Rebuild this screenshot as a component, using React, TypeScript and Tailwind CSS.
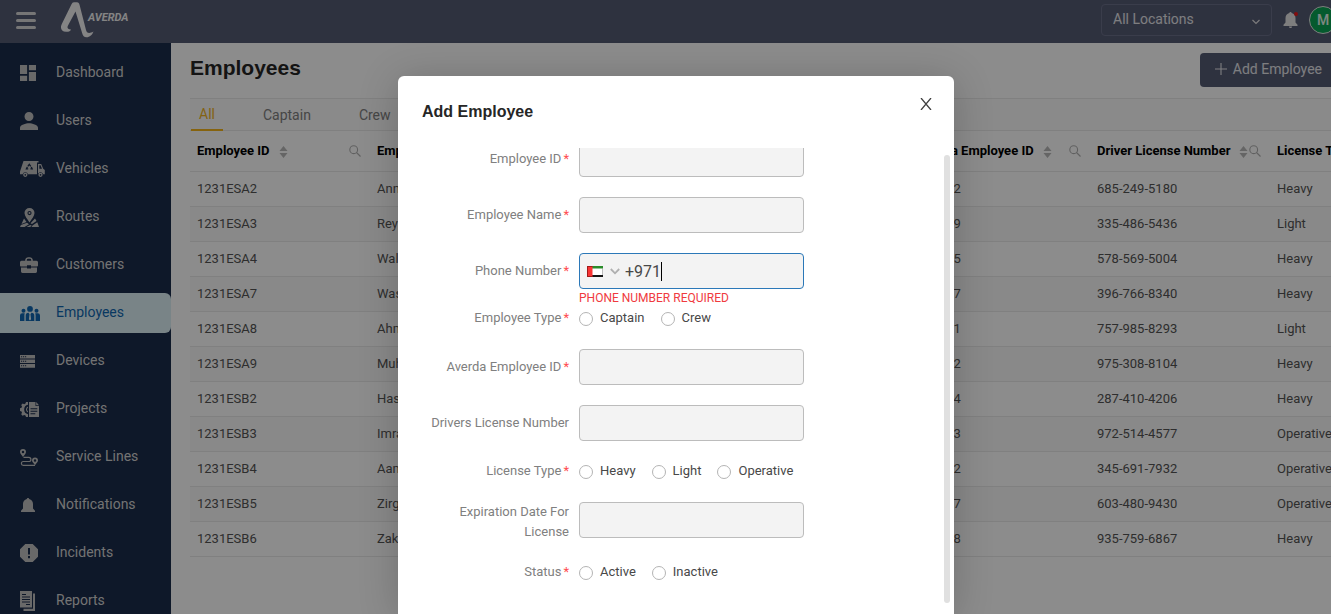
import React from 'react';

const iconDashboard = (
  <svg className="h-4 w-4" viewBox="3 3 18 18" fill="currentColor"><path d="M3 13h8V3H3v10zm0 8h8v-6H3v6zm10 0h8V11h-8v10zm0-18v6h8V3h-8z" /></svg>
);
const iconUsers = (
  <svg className="h-[18px] w-[18px]" viewBox="4 4 16 16" fill="currentColor"><path d="M12 12c2.210 0 4-1.790 4-4s-1.790-4-4-4-4 1.790-4 4 1.790 4 4 4zm0 2c-2.670 0-8 1.340-8 4v2h16v-2c0-2.660-5.330-4-8-4z" /></svg>
);
const iconVehicles = (
  <svg className="h-4 w-[25px]" viewBox="0 0 25 16" fill="currentColor">
    <path fillRule="evenodd" d="M3.500 0H17v13.300h-9a2.800 2.800 0 0 0-5.400 0H0V10.500z M9.300 2.300l-2 2.600 1 .8 1-1.300 1 1.300 1-.8z M6.700 5.800l-1.300 2.800h2.800v-1.300h-.8l.6-1z M11.900 5.800l1.300 2.800h-2.800v-1.300h.8l-.6-1z" />
    <path d="M18 3h3.200l2 4.700 1.600 1.300v4.300h-1.600a2.800 2.800 0 0 0-5.200-.6z" />
    <path d="M19.300 4.200h1.300l1.400 3.500h-2.700z" className="fill-[#1b2c4b]" />
    <path d="M17 0h1.500v1.500H17z" />
    <circle cx="5.300" cy="13.800" r="1.500" fill="none" stroke="currentColor" strokeWidth="1.300" />
    <circle cx="20.500" cy="13.800" r="1.500" fill="none" stroke="currentColor" strokeWidth="1.300" />
  </svg>
);
const iconRoutes = (
  <svg className="h-[19px] w-[19px]" viewBox="0 0 19 19" fill="currentColor">
    <path fillRule="evenodd" d="M9.500 0a5 5 0 0 1 5 5.100c0 3-3 6.200-5 9.400-2-3.200-5-6.400-5-9.400A5 5 0 0 1 9.500 0zm0 3a2.100 2.100 0 1 0 0 4.200 2.100 2.100 0 0 0 0-4.200z" />
    <circle cx="9.500" cy="5.100" r="1" />
    <path d="M4 10.500l2.500 3.500L1.500 16zM15 10.500l1.500 2.500-4.500 3-1.500-.8zM.9 17l6.100-2.300 2 1.600L4.500 19H0zM10.200 17l1.600.7L10 19H6.500zM17.300 14.200L19 19h-7.500l1-1.500z" />
  </svg>
);
const iconCustomers = (
  <svg className="h-4 w-[18px]" viewBox="0 0 18 16" fill="currentColor">
    <path d="M6 4V2.800A2 2 0 0 1 8 1h2a2 2 0 0 1 2 1.800V4" fill="none" stroke="currentColor" strokeWidth="1.600" />
    <path d="M1.500 3.700h15A1.500 1.500 0 0 1 18 5.200v3.300a1 1 0 0 1-1 1h-6V8.200H7v1.300H1a1 1 0 0 1-1-1V5.200a1.500 1.500 0 0 1 1.500-1.500zM1 10.600h6v1h4v-1h6v4a1.400 1.400 0 0 1-1.400 1.400H2.400A1.400 1.400 0 0 1 1 14.600z" />
  </svg>
);
const iconEmployees = (
  <svg className="h-[15px] w-5" viewBox="0 0 20 15" fill="currentColor">
    <circle cx="10" cy="2.900" r="2.900" /><circle cx="3.500" cy="4.700" r="2" /><circle cx="16.500" cy="4.700" r="2" />
    <path d="M5.700 15V9.500A2.800 2.800 0 0 1 8.500 6.700l1 1.600-.6 5 1.100 1.200 1.100-1.200-.6-5 1-1.600a2.800 2.800 0 0 1 2.800 2.800V15z" />
    <path d="M0 15V9.500a2.200 2.200 0 0 1 2.200-2.200h2.600c-.3.600-.4 1.300-.4 2V15zM20 15V9.500a2.200 2.200 0 0 0-2.200-2.200h-2.600c.3.600.4 1.300.4 2V15z" />
  </svg>
);
const iconDevices = (
  <svg className="h-[13px] w-[15px]" viewBox="0 0 15 13" fill="currentColor">
    <path d="M0 0h15v3.500H0zM0 4.500h15V8H0zM0 9h15v3.200H0zM0 12.400h15v.6H0z" />
    <path d="M1 1.200h1.200v1H1zM3 1.200h1.200v1H3zM5 1.200h1.200v1H5zM1 5.700h1.200v1H1zM3 5.700h1.200v1H3zM5 5.700h1.200v1H5zM1 10.200h1.200v1H1zM3 10.200h1.200v1H3zM5 10.200h1.200v1H5z" className="fill-[#1b2c4b]" />
  </svg>
);
const iconProjects = (
  <svg className="h-[15px] w-5" viewBox="0 0 20 15" fill="currentColor">
    <path d="M8 0v2.800a4.800 4.800 0 0 0 0 9.400V15H6l-.5-1.600-1.300-.5-1.600.8-1.400-1.500.8-1.500-.5-1.200L0 9V6.300l1.500-.6.5-1.200L1.200 3l1.500-1.600 1.500.8 1.300-.6L6 0z" />
    <path d="M8 4.500a3.200 3.200 0 0 0 0 6v-1.300a2 2 0 0 1 0-3.400z" />
    <path fillRule="evenodd" d="M9 0h6.500v4H19v11H9zm1.500 6.200v1h6.800v-1zm0 2.500v1h6.800v-1zm0 2.500v1h4.800v-1z" />
    <path d="M16.200 0L19 3.200h-2.800z" />
  </svg>
);
const iconService = (
  <svg className="h-[17px] w-[18px]" viewBox="0 0 18 17" fill="currentColor">
    <path fillRule="evenodd" d="M3 0a3 3 0 0 1 3 3c0 1.600-2 3.300-3 5-1-1.700-3-3.400-3-5a3 3 0 0 1 3-3zm0 1.800a1.200 1.200 0 1 0 0 2.500 1.200 1.200 0 0 0 0-2.500zM15 8.500a3 3 0 0 1 3 3c0 1.600-2 3-3 4.700-1-1.700-3-3.100-3-4.700a3 3 0 0 1 3-3zm0 1.800a1.200 1.200 0 1 0 0 2.500 1.200 1.200 0 0 0 0-2.500z" />
    <path d="M3.500 8.300h5.300a1.800 1.800 0 0 1 0 4.200H3.300a1.900 1.900 0 0 0 0 3.800H15" fill="none" stroke="currentColor" strokeWidth="1.200" />
  </svg>
);
const bellPath = 'M7 0c.7 0 1.100.5 1.200 1.100C10.500 1.700 12 3.600 12 6v4.500l2 2.200V14H0v-1.300l2-2.200V6c0-2.400 1.500-4.300 3.800-4.900C5.900.5 6.300 0 7 0z';
const iconNotifications = (
  <svg className="ml-px h-3.5 w-3.5" viewBox="0 0 14 14" fill="currentColor"><path d={bellPath} /></svg>
);
const iconIncidents = (
  <svg className="h-[18px] w-[18px]" viewBox="0 0 18 18" fill="currentColor"><path fillRule="evenodd" d="M5.300 0h7.400L18 5.300v7.400L12.700 18H5.300L0 12.700V5.300zM8 4v6.500h2V4zm0 8v2.200h2V12z" /></svg>
);
const iconReports = (
  <svg className="h-5 w-[15px]" viewBox="0 0 15 20" fill="currentColor">
    <path fillRule="evenodd" d="M0 0h12v16.500H0zm2 3v1h4V3zm0 2.600v1h8v-1zm0 2.400v1h8V8zm0 2.500v1h8v-1zm4 2.500v1h4v-1z" />
    <path d="M13 2.500h2V20H3.500v-2.200H13z" />
  </svg>
);

const navItems = [
  { label: 'Dashboard', icon: iconDashboard },
  { label: 'Users', icon: iconUsers },
  { label: 'Vehicles', icon: iconVehicles },
  { label: 'Routes', icon: iconRoutes },
  { label: 'Customers', icon: iconCustomers },
  { label: 'Employees', icon: iconEmployees, active: true },
  { label: 'Devices', icon: iconDevices },
  { label: 'Projects', icon: iconProjects },
  { label: 'Service Lines', icon: iconService },
  { label: 'Notifications', icon: iconNotifications },
  { label: 'Incidents', icon: iconIncidents },
  { label: 'Reports', icon: iconReports },
];

const columns = ['Employee ID', 'Employee Name', 'Phone Number', 'Employee Type', 'Averda Employee ID', 'Driver License Number', 'License Type'];

const rows = [
  ['1231ESA2', 'Anna', '', '', '100012', '685-249-5180', 'Heavy'],
  ['1231ESA3', 'Rey', '', '', '100019', '335-486-5436', 'Light'],
  ['1231ESA4', 'Wali', '', '', '100025', '578-569-5004', 'Heavy'],
  ['1231ESA7', 'Wasim', '', '', '100037', '396-766-8340', 'Heavy'],
  ['1231ESA8', 'Ahmed', '', '', '100041', '757-985-8293', 'Light'],
  ['1231ESA9', 'Muhammad', '', '', '100052', '975-308-8104', 'Heavy'],
  ['1231ESB2', 'Hassan', '', '', '100064', '287-410-4206', 'Heavy'],
  ['1231ESB3', 'Imran', '', '', '100073', '972-514-4577', 'Operative'],
  ['1231ESB4', 'Aamir', '', '', '100082', '345-691-7932', 'Operative'],
  ['1231ESB5', 'Zirgham', '', '', '100097', '603-480-9430', 'Operative'],
  ['1231ESB6', 'Zakir', '', '', '100108', '935-759-6867', 'Heavy'],
];

function Header() {
  return (
    <header className="flex h-[43px] items-center bg-[#555b74] pb-1 pl-4">
      <button aria-label="Toggle menu" className="flex w-5 flex-col gap-1 pt-0.5">
        <span className="h-[3px] rounded bg-[#d8d8d8]" />
        <span className="h-[3px] rounded bg-[#d8d8d8]" />
        <span className="h-[3px] rounded bg-[#d8d8d8]" />
      </button>
      <a href="#home" className="ml-6 flex items-center text-[#f0f0f0]">
        <svg className="h-9 w-[34px]" viewBox="0 0 34 36" fill="currentColor">
          <path d="M13 .5C14 0 17 0 18 .5c1 .4 1.300 1.500 1.600 2.500L26 28c.8 3 3 4 7.500 1.500-1 3-3.800 5.800-7 5.800-2.500 0-3.600-1.500-4.300-4L15.500 9.500 8 23.500c-1 2-.8 3.500 3 4-.5 1.800-2.500 2.500-5 2.300C1.500 29.400-.3 26 1.800 22L11.500 2.300C12 1.300 12.300.8 13 .5z" />
        </svg>
        <span className="-ml-1.5 pb-1 text-[11px] font-bold italic leading-4">AVERDA</span>
      </a>
      <div className="ml-auto flex items-center">
        <div className="relative">
          <select aria-label="Location" className="h-8 w-[171px] appearance-none rounded border border-[#6a7089] bg-transparent pb-0.5 pl-[11px] text-sm text-white/85">
            <option>All Locations</option>
          </select>
          <svg className="pointer-events-none absolute right-3 top-[15px] h-1.5 w-2" viewBox="0 0 8 6" fill="none" stroke="#e0e0e0" strokeWidth="1.200"><path d="M.5 1L4 4.500 7.500 1" /></svg>
        </div>
        <button aria-label="Notifications" className="relative ml-[11px] text-[#e5e5e5]">
          <svg className="h-4 w-[15px]" viewBox="0 0 14 16" fill="currentColor"><path d={bellPath} /><path d="M5.500 14.600h3a1.500 1.500 0 0 1-3 0z" /></svg>
          <span className="absolute right-0 top-0 h-1 w-1 rounded-full bg-[#f01818]" />
        </button>
        <button className="ml-[11px] h-7 w-7 rounded-full border border-[#e5e5e5] bg-[#0aa554] text-sm font-medium text-white/90">M</button>
      </div>
    </header>
  );
}

function Sidebar() {
  return (
    <nav className="flex w-[171px] shrink-0 flex-col gap-2 bg-[#1b2c4b] pt-2.5">
      {navItems.map((item) => (
        <a
          key={item.label}
          href={'#' + item.label}
          className={
            item.active
              ? 'flex h-10 shrink-0 items-center rounded-r-md bg-[#dcf0f6] pl-5 text-sm text-[#0f67b1]'
              : 'flex h-10 shrink-0 items-center pl-5 text-sm text-[#d2d2d2]'
          }
        >
          <span className={item.active ? 'w-9 shrink-0' : 'w-9 shrink-0 text-[#c0c0c0]'}>{item.icon}</span>
          <span className="pb-0.5">{item.label}</span>
        </a>
      ))}
    </nav>
  );
}

function ColumnHeading({ title }: { title: string }) {
  return (
    <div className="flex items-center">
      <span className="whitespace-nowrap">{title}</span>
      <button aria-label={'Sort by ' + title} className="ml-[9px]">
        <svg className="mt-0.5 h-3 w-[9px]" viewBox="0 0 8 12" fill="#b8b8b8"><path d="M4 0l4 5H0zM4 12L0 7h8z" /></svg>
      </button>
      <button aria-label={'Search ' + title} className="ml-auto">
        <svg className="h-3 w-3" viewBox="0 0 12 12" fill="none" stroke="#b0b0b0" strokeWidth="1.100"><circle cx="4.700" cy="4.700" r="3.900" /><path d="M7.500 7.500l4 4" /></svg>
      </button>
    </div>
  );
}

function Employees() {
  return (
    <main className="min-w-0 flex-1 overflow-hidden bg-white pl-[19px]">
      <div className="flex h-[55px] items-center justify-between pb-0.5">
        <h1 className="pb-1 font-['Liberation_Sans',sans-serif] text-[21px] font-bold text-[#262626]">Employees</h1>
        <button className="flex h-[34px] items-center rounded bg-[#555b74] px-[15px] pb-0.5 text-sm text-white/85">
          <svg className="mr-1.5 h-3 w-3" viewBox="0 0 12 12" stroke="currentColor" strokeWidth="1.100"><path d="M6 0v12M0 6h12" /></svg>
          Add Employee
        </button>
      </div>
      <div className="flex h-[33px] border-y border-[#eaeaea] bg-[#fbfbfb] pl-px text-sm text-[#808080]">
        <button className="-mb-px border-b-2 border-[#f5b51b] px-2 text-[#f0b323]">All</button>
        <button className="ml-8 px-2">Captain</button>
        <button className="ml-8 px-2">Crew</button>
      </div>
      <table className="w-[1260px] table-fixed border-collapse text-left text-[13px]">
        <thead>
          <tr className="h-10 border-b border-[#eaeaea]">
            {columns.map((c) => (
              <th key={c} className="pl-[7px] pr-[9px] font-bold text-black"><ColumnHeading title={c} /></th>
            ))}
          </tr>
        </thead>
        <tbody>
          {rows.map((r) => (
            <tr key={r[0]} className="h-[35px] border-b border-[#eaeaea] text-[#545454] even:bg-[#fafafa]">
              {r.map((cell, i) => (
                <td key={i} className="px-[7px]">{cell}</td>
              ))}
            </tr>
          ))}
        </tbody>
      </table>
    </main>
  );
}

function Field({ id, label, required, error, radio, children }: { id?: string; label: string; required?: boolean; error?: string; radio?: boolean; children: React.ReactNode }) {
  const Tag = radio ? 'span' : 'label';
  return (
    <div className={error ? 'flex items-start gap-2.5' : radio ? 'flex items-start gap-2.5 pb-[19px]' : 'flex items-start gap-2.5 pb-5'}>
      <Tag
        {...(radio ? {} : { htmlFor: id })}
        className={
          radio
            ? 'flex w-[147px] shrink-0 justify-end gap-0.5 text-right text-[13px] leading-5 text-[#808080]'
            : 'flex min-h-9 w-[147px] shrink-0 items-center justify-end gap-0.5 text-right text-[13px] leading-5 text-[#808080]'
        }
      >
        <span>{label}</span>
        {required && <span className="text-[#ff4d4f]">*</span>}
      </Tag>
      <div>
        {children}
        {error && <p className="h-[19px] text-xs leading-[18px] text-[#f03a3e]">{error}</p>}
      </div>
    </div>
  );
}

function TextField({ id, label, required }: { id: string; label: string; required?: boolean }) {
  return (
    <Field id={id} label={label} required={required}>
      <input id={id} className="block h-9 w-[225px] rounded border border-[#bcbcbc] bg-[#f3f3f3] px-2 text-sm" />
    </Field>
  );
}

function RadioField({ name, label, options }: { name: string; label: string; options: string[] }) {
  return (
    <Field label={label} required radio>
      <div role="radiogroup" aria-label={label} className="flex h-[22px] gap-4 text-[13px] leading-5 text-[#484848]">
        {options.map((o) => (
          <label key={o} className="flex items-start gap-[7px]">
            <input type="radio" name={name} className="mt-1 h-3.5 w-3.5 appearance-none rounded-full border border-[#b4b4b4] bg-white" />
            {o}
          </label>
        ))}
      </div>
    </Field>
  );
}

function Modal() {
  return (
    <div role="dialog" aria-label="Add Employee" className="flex h-full w-[556px] flex-col rounded-t-md bg-white shadow-[0_4px_40px_rgba(0,0,0,0.2)]">
      <div className="flex h-[72px] shrink-0 items-start justify-between px-6 pt-[22px]">
        <h2 className="pt-0.5 font-['Liberation_Sans',sans-serif] text-base font-bold text-[#262626]">Add Employee</h2>
        <button aria-label="Close" className="-mr-0.5">
          <svg className="h-3 w-3" viewBox="0 0 12 12" fill="none" stroke="#404040" strokeWidth="1.300"><path d="M1 0l10 12M11 0L1 12" /></svg>
        </button>
      </div>
      <div className="flex min-h-0 flex-1 overflow-hidden">
        <form className="-mt-[7px] flex-1 pl-6">
          <TextField id="employee-id" label="Employee ID" required />
          <TextField id="employee-name" label="Employee Name" required />
          <Field id="phone" label="Phone Number" required error="PHONE NUMBER REQUIRED">
            <div className="flex h-9 w-[225px] items-center rounded border border-[#2b78b8] bg-[#f3f3f3] pl-[7px]">
              <button type="button" aria-label="Country" className="flex items-center gap-[7px]">
                <svg className="h-[11px] w-4" viewBox="0 0 16 11"><path fill="#fff" d="M0 0h16v11H0z" /><path fill="#2a8c2a" d="M0 0h16v2.500H0z" /><path fill="#151515" d="M0 9h16v2H0z" /><path fill="#f83434" d="M0 0h5.500v11H0z" /><path fill="none" stroke="#801010" strokeWidth=".8" d="M5.500.400H.4v10.200h5.100" /><path fill="none" stroke="#777" strokeWidth=".6" d="M15.700 2.500V9" /></svg>
                <svg className="h-[7px] w-2.5" viewBox="0 0 10 7" fill="none" stroke="#b0b0b0" strokeWidth="1.800"><path d="M.8 1L5 5.300 9.200 1" /></svg>
              </button>
              <input id="phone" defaultValue="+971" className="ml-[5px] w-9 bg-transparent pt-px text-base text-[#484848] outline-none" />
              <span className="h-[19px] w-px bg-black" />
            </div>
          </Field>
          <RadioField name="employee-type" label="Employee Type" options={['Captain', 'Crew']} />
          <TextField id="averda-id" label="Averda Employee ID" required />
          <TextField id="license-number" label="Drivers License Number" />
          <RadioField name="license-type" label="License Type" options={['Heavy', 'Light', 'Operative']} />
          <TextField id="expiration" label="Expiration Date For License" />
          <RadioField name="status" label="Status" options={['Active', 'Inactive']} />
        </form>
        <div className="mb-[11px] mr-1 mt-[7px] w-1.5 rounded-full bg-[#e0e0e0]" />
      </div>
    </div>
  );
}

export default function App() {
  return (
    <div className="relative h-screen overflow-hidden font-['Roboto',sans-serif]">
      <div className="-mr-1.5 flex h-full flex-col">
        <Header />
        <div className="flex min-h-0 flex-1">
          <Sidebar />
          <Employees />
        </div>
      </div>
      <div className="absolute inset-0 flex justify-center bg-black/45 pl-[21px] pt-[76px]">
        <Modal />
      </div>
    </div>
  );
}
